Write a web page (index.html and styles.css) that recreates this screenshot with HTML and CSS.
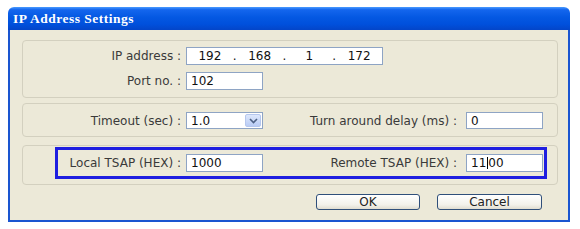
FILE: index.html
```html
<!DOCTYPE html>
<html>
<head>
<meta charset="utf-8">
<link rel="stylesheet" href="styles.css">
</head>
<body>
<div class="window">
  <div class="titlebar"><span class="title">IP Address Settings</span></div>
  <div class="content">
    <div class="group g1">
      <div class="row">
        <span class="label la">IP address :</span>
        <div class="field ip">
          <span class="seg">192</span><span class="dot">.</span>
          <span class="seg">168</span><span class="dot">.</span>
          <span class="seg">1</span><span class="dot">.</span>
          <span class="seg">172</span>
        </div>
      </div>
      <div class="row">
        <span class="label la">Port no. :</span>
        <div class="field short">102</div>
      </div>
    </div>
    <div class="group g2">
      <div class="row">
        <span class="label la">Timeout (sec) :</span>
        <div class="field short select">
          <span class="val">1.0</span>
          <span class="dropbtn"><svg width="9" height="6" viewBox="0 0 9 6"><path d="M1 1 L4.5 4.5 L8 1" fill="none" stroke="#4D6185" stroke-width="1.6"/></svg></span>
        </div>
        <span class="label lb">Turn around delay (ms) :</span>
        <div class="field short">0</div>
      </div>
    </div>
    <div class="group g3">
      <div class="highlight">
        <span class="label lc">Local TSAP (HEX) :</span>
        <div class="field short">1000</div>
        <span class="label lb">Remote TSAP (HEX) :</span>
        <div class="field short">11<span class="caret"></span>00</div>
      </div>
    </div>
    <div class="buttons">
      <button class="btn ok">OK</button>
      <button class="btn cancel">Cancel</button>
    </div>
  </div>
</div>
</body>
</html>
```
FILE: styles.css
```css
html, body {
  margin: 0;
  padding: 0;
  background: #ffffff;
}
body {
  font-family: "DejaVu Sans", Verdana, sans-serif;
  font-size: 12px;
  color: #3a3a3a;
}
.window {
  margin: 7px 0 0 8px;
  width: 562px;
}
.titlebar {
  height: 23px;
  border-radius: 6px 6px 0 0;
  background: linear-gradient(#4a9bff 0%, #1466ee 12%, #0458e2 45%, #0050dc 75%, #0345c8 100%);
  display: flex;
  align-items: center;
  padding-left: 5px;
}
.title {
  font-family: "Liberation Serif", "Times New Roman", serif;
  font-weight: bold;
  font-size: 13.5px;
  color: #ffffff;
  letter-spacing: 0.5px;
  padding-top: 1px;
}
.content {
  background: #ECE9D8;
  border: 2px solid #1a55d0;
  border-top: none;
  padding: 10px 10px 10px 12px;
}
.group {
  border: 1px solid #d3d0bf;
  border-radius: 4px;
}
.g1 {
  padding-top: 6px;
  box-sizing: border-box;
  height: 58px;
  display: flex;
  flex-direction: column;
  gap: 7px;
}
.g2 {
  margin-top: 5px;
  height: 34px;
  box-sizing: border-box;
  padding-top: 8px;
}
.g3 {
  margin-top: 8px;
  height: 40px;
  box-sizing: border-box;
  padding-top: 1px;
}
.row {
  display: flex;
  align-items: center;
  height: 18px;
}
.g2 .row { height: 17px; }
.label {
  text-align: right;
  white-space: nowrap;
  flex: none;
}
.la { width: 158px; margin-right: 5px; }
.lb { width: 194px; margin-right: 9px; }
.lc { width: 123px; margin-right: 5px; }
.field {
  box-sizing: border-box;
  height: 18px;
  background: #ffffff;
  border: 1px solid #8ea4c4;
  color: #111;
  display: flex;
  align-items: center;
  padding-left: 4px;
  flex: none;
}
.g2 .field { height: 17px; }
.short { width: 77px; }
.ip {
  width: 197px;
  padding-left: 0;
}
.seg {
  width: 46px;
  text-align: center;
}
.dot {
  width: 4px;
  text-align: center;
}
.select {
  justify-content: space-between;
  padding-right: 1px;
}
.dropbtn {
  width: 16px;
  height: 13px;
  border-radius: 2px;
  background: linear-gradient(#dde7fc, #b9ccf5);
  border: 1px solid #b5c7ee;
  box-sizing: border-box;
  display: flex;
  align-items: center;
  justify-content: center;
}
.highlight {
  margin-left: 32px;
  width: 492px;
  height: 32px;
  box-sizing: border-box;
  border: 3px solid #1e1ee0;
  display: flex;
  align-items: center;
}
.caret {
  display: inline-block;
  width: 1px;
  height: 12px;
  background: #000;
  margin: 0 0 0 1px;
}
.buttons {
  margin-top: 9px;
  display: flex;
  justify-content: flex-end;
  gap: 17px;
  padding-right: 16px;
}
.btn {
  height: 16px;
  box-sizing: border-box;
  border: 1px solid #2f4f7a;
  border-radius: 3px;
  background: linear-gradient(#ffffff, #f2f1ea 70%, #e0ddd0);
  font-family: "DejaVu Sans", Verdana, sans-serif;
  font-size: 12px;
  color: #222;
  padding: 0;
  line-height: 13px;
}
.ok { width: 104px; }
.cancel { width: 105px; }
```
